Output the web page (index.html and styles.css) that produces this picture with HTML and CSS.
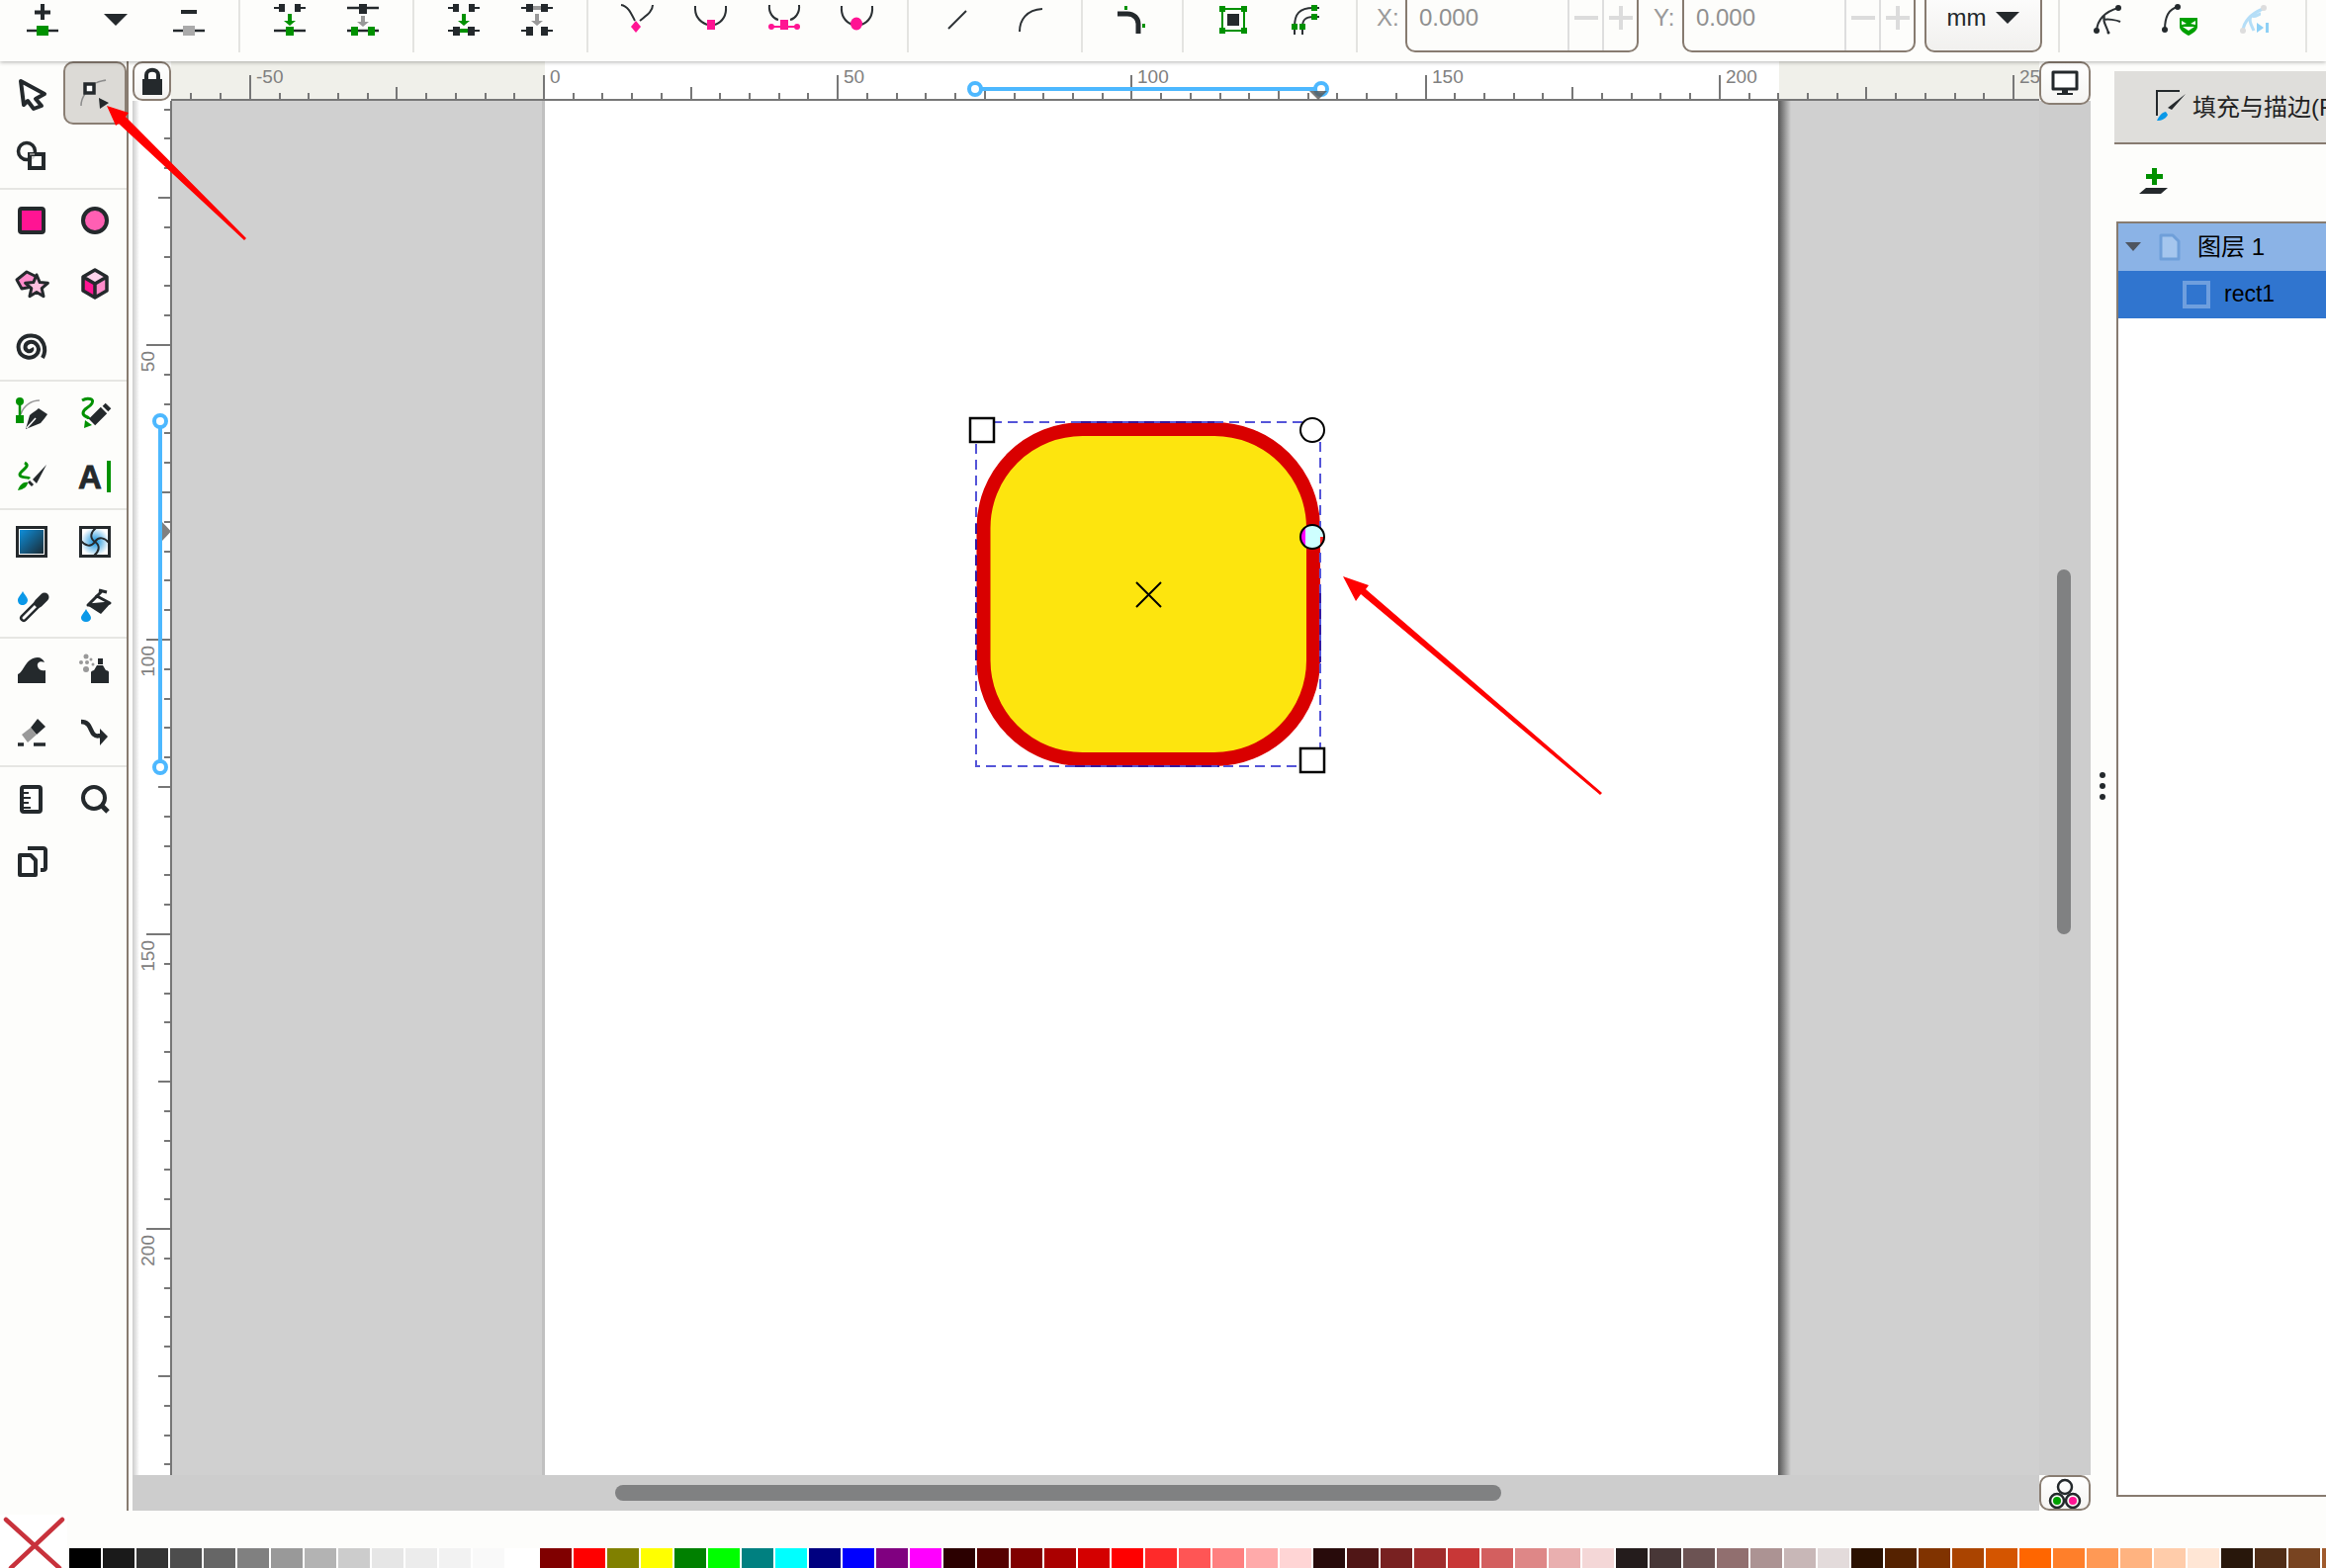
FILE: index.html
```html
<!DOCTYPE html>
<html lang="en">
<head>
  <meta charset="UTF-8">
  <title>Inkscape</title>
  <link rel="stylesheet" href="styles.css">
</head>
<body>
  <!-- top command bar, the icons are cut by the window edge -->
  <div class="toolbar">
    <div class="cmd"><svg width="74" height="53"><path class="d" d="M29 10.500H45V14.500H29ZM35 4H39V20H35Z"/><path class="ln" d="M21 31H53"/><rect class="g" x="31" y="26" width="12" height="10"/></svg></div>
    <div class="cmd"><svg width="74" height="53"><path class="d" d="M25 14H49L37 26Z"/></svg></div>
    <div class="cmd"><svg width="74" height="53"><path class="d" d="M29 10H45V14H29Z"/><path class="ln" d="M21 31H53"/><rect x="31" y="26" width="12" height="10" fill="#aaa"/></svg></div>
    <div class="sep"></div>
    <div class="cmd"><svg width="74" height="53"><path class="d" d="M26 4H32V12H26ZM42 4H48V12H42ZM21 7H26V9H21ZM48 7H53V9H48Z"/><path class="g" d="M35 14H39V21H43L37 26L31 21H35Z"/><path class="ln" d="M21 31H53"/><rect class="g" x="33" y="27" width="8" height="9"/></svg></div>
    <div class="cmd"><svg width="74" height="53"><path class="ln" d="M21 8H53"/><rect class="d" x="33" y="4" width="8" height="10"/><path fill="#999" d="M35 16H39V22H43L37 27L31 22H35Z"/><path class="ln" d="M21 31H53"/><path class="g" d="M25 27H32V36H25ZM42 27H49V36H42Z"/></svg></div>
    <div class="sep"></div>
    <div class="cmd"><svg width="74" height="53"><path class="d" d="M26 4H32V12H26ZM42 4H48V12H42ZM21 7H26V9H21ZM48 7H53V9H48Z"/><path class="g" d="M35 14H39V21H43L37 26L31 21H35Z"/><path class="d" d="M26 27H33V36H26ZM41 27H48V36H41ZM21 30H26V32H21ZM48 30H53V32H48Z"/><rect class="g" x="33" y="29" width="8" height="4"/></svg></div>
    <div class="cmd"><svg width="74" height="53"><path class="d" d="M26 4H33V12H26ZM41 4H48V12H41ZM21 7H26V9H21ZM48 7H53V9H48Z"/><rect x="33" y="6" width="8" height="4" fill="#999"/><path fill="#999" d="M35 14H39V21H43L37 26L31 21H35Z"/><path class="d" d="M26 27H33V36H26ZM41 27H48V36H41ZM21 30H26V32H21ZM48 30H53V32H48Z"/></svg></div>
    <div class="sep"></div>
    <div class="cmd"><svg width="74" height="53"><path class="cv" d="M20 5C27 6 30 13 34 21M52 5C52 12 45 16 39 21"/><path class="p" d="M35 21L40 27L35 33L30 27Z"/></svg></div>
    <div class="cmd"><svg width="74" height="53"><path class="cv" d="M21 6C20 18 28 23 33 25M52 6C53 18 46 23 41 25"/><rect class="p" x="33" y="20" width="8" height="10"/></svg></div>
    <div class="cmd"><svg width="74" height="53"><path class="cv" d="M22 5C21 13 26 19 31 20M52 5C53 13 48 19 43 20"/><rect class="p" x="33" y="20" width="8" height="10"/><circle class="p" cx="24" cy="27" r="3"/><circle class="p" cx="50" cy="27" r="3"/><path d="M24 27H50" stroke="#ff1493" stroke-width="2"/></svg></div>
    <div class="cmd"><svg width="74" height="53"><path class="cv" d="M21 6C20 18 27 23 32 25M52 6C53 18 46 23 41 25"/><ellipse class="p" cx="36" cy="24" rx="6" ry="6.500"/></svg></div>
    <div class="sep"></div>
    <div class="cmd"><svg width="74" height="53"><path class="cv" d="M27 29L45 11"/></svg></div>
    <div class="cmd"><svg width="74" height="53"><path class="cv" d="M25 32C25 20 32 10 48 9"/></svg></div>
    <div class="sep"></div>
    <div class="cmd"><svg width="74" height="53"><path class="thick" d="M22 14H32C39 14 43 19 43 24V34"/><path class="g" d="M29 6H32V10H29ZM47 24H50V28H47Z"/></svg></div>
    <div class="sep"></div>
    <div class="cmd"><svg width="74" height="53"><rect x="31" y="14" width="12" height="12" class="d"/><rect x="26" y="9" width="22" height="22" fill="none" stroke="#009100" stroke-width="2"/><path class="g" d="M23 6H29V12H23ZM45 6H51V12H45ZM23 28H29V34H23ZM45 28H51V34H45Z"/></svg></div>
    <div class="cmd"><svg width="74" height="53"><path class="cv" d="M25 35V27C25 14 30 8 44 8H50M33 35V27C33 20 36 17 44 17H50"/><path class="g" d="M22 24H28V30H22ZM30 24H36V30H30ZM42 5H48V11H42ZM42 14H48V20H42Z"/></svg></div>
    <div class="sep"></div>

    <span class="coord-label coord-x">X:</span>
    <div class="spin">
      <span class="spin-value">0.000</span>
      <span class="spin-btn"><svg width="26" height="26"><path d="M1 11H25V15H1Z"/></svg></span>
      <span class="spin-btn"><svg width="26" height="26"><path d="M1 11H25V15H1ZM11 1H15V25H11Z"/></svg></span>
    </div>
    <span class="coord-label coord-y">Y:</span>
    <div class="spin">
      <span class="spin-value">0.000</span>
      <span class="spin-btn"><svg width="26" height="26"><path d="M1 11H25V15H1Z"/></svg></span>
      <span class="spin-btn"><svg width="26" height="26"><path d="M1 11H25V15H1ZM11 1H15V25H11Z"/></svg></span>
    </div>
    <div class="unit"><span>mm</span><svg width="24" height="12"><path class="d" d="M0 0H24L12 12Z"/></svg></div>
    <div class="sep"></div>
    <div class="cmd"><svg width="74" height="53"><path class="cv" d="M24 31C25 20 32 12 46 8M36 33C33 24 30 22 32 16M31 20C35 19 44 20 48 22"/><circle class="d" cx="24" cy="31" r="3"/><circle class="d" cx="46" cy="8" r="3"/><circle class="d" cx="36" cy="33" r="1.500"/></svg></div>
    <div class="cmd"><svg width="74" height="53"><path class="cv" d="M19 30C19 18 23 9 32 7"/><circle class="d" cx="19" cy="30" r="3"/><circle class="d" cx="32" cy="7" r="3"/><path fill="#00a000" d="M34 18H52V27C52 31 47 34 43 36C39 34 34 31 34 27Z"/><path fill="#fff" d="M36 21L41 24L36 25ZM50 21L45 24L50 25ZM37 27H49L43 31Z"/></svg></div>
    <div class="cmd"><svg width="74" height="53"><path d="M24 31C25 22 30 15 44 9M35 31C32 24 30 22 32 16M33 16C36 18 40 14 42 14" fill="none" stroke="#b5def7" stroke-width="3"/><circle cx="24" cy="31" r="3" fill="#ddd"/><circle cx="45" cy="8" r="3" fill="#ddd"/><path fill="#8ed0f5" d="M38 23L45 28L38 33ZM47 23H50V33H47Z"/></svg></div>
    <div class="sep"></div>
  </div>

  <div class="main">
    <!-- tool box on the left -->
    <div class="tools">
      <div class="tool-group">
        <div class="tool"><svg width="64" height="64"><path d="M21 20L45 33L36 38L42 45L34 48L28 40L24 44Z" fill="#fff" stroke="#24292c" stroke-width="4" stroke-linejoin="round"/></svg></div>
        <div class="tool tool-active"><svg width="64" height="64"><path d="M33 22C36 20 40 20 43 19M18 45C18 40 19 37 22 33" fill="none" stroke="#8d8d8d" stroke-width="1.500"/><rect x="22" y="23" width="9" height="9" fill="#fff" stroke="#24292c" stroke-width="3.500"/><path class="d" d="M36 37L46 42L37 48Z"/></svg></div>
        <div class="tool"><svg width="64" height="64"><circle cx="27" cy="27" r="8.500" fill="none" stroke="#24292c" stroke-width="3.500"/><rect x="30" y="30" width="14" height="14" fill="#fff" fill-opacity=".8" stroke="#24292c" stroke-width="4"/><path d="M30 30H35" stroke="#888" stroke-width="2"/></svg></div>
        <div class="tool"></div>
      </div>
      <div class="tool-group">
        <div class="tool"><svg width="64" height="64"><rect x="20" y="19" width="24" height="24" rx="2" fill="#ff1493" stroke="#24292c" stroke-width="4"/></svg></div>
        <div class="tool"><svg width="64" height="64"><circle cx="32" cy="31" r="12" fill="#ff5fb3" stroke="#24292c" stroke-width="4"/></svg></div>
        <div class="tool"><svg width="64" height="64"><path d="M17 27L27 19L37 24L38 33L22 36Z" fill="#ff8ccb" stroke="#24292c" stroke-width="3" stroke-linejoin="round"/><path d="M37 22L40.200 29.600L48.400 30.300L42.200 35.700L44 43.700L37 39.500L30 43.700L31.800 35.700L25.600 30.300L33.800 29.600Z" fill="#ffc0e0" stroke="#24292c" stroke-width="3" stroke-linejoin="round"/></svg></div>
        <div class="tool"><svg width="64" height="64"><path d="M32 17L44 24L32 31L20 24Z" fill="#ffd5ee"/><path d="M20 24L32 31V45L20 38Z" fill="#ff1493"/><path d="M44 24L32 31V45L44 38Z" fill="#ff8ccb"/><path d="M32 17L44 24V38L32 45L20 38V24ZM20 24L32 31L44 24M32 31V45" fill="none" stroke="#24292c" stroke-width="3.500" stroke-linejoin="round"/></svg></div>
        <div class="tool"><svg width="64" height="64"><path d="M43 42C48 33 44 20 32 19.500C22 19 17 27 19 34C21 42 33 45 38 37C41 31 36 25 30 26C25 27 24 33 28 35C31 36 33 34 32 32" fill="none" stroke="#24292c" stroke-width="4"/></svg></div>
        <div class="tool"></div>
      </div>
      <div class="tool-group">
        <div class="tool"><svg width="64" height="64"><path d="M21 33C24 24 32 19 40 19" fill="none" stroke="#999" stroke-width="1.500"/><path d="M20 20V38" stroke="#009100" stroke-width="2.500"/><circle class="g" cx="20" cy="20" r="4"/><rect class="g" x="16" y="34" width="8" height="8"/><path class="d" d="M26 48L30 34C32 32 37 29 39 27L48 33C46 36 42 41 41 42Z"/><path d="M27 47L36 37" stroke="#fff" stroke-width="1.500"/></svg></div>
        <div class="tool"><svg width="64" height="64"><path d="M19 19C24 16 32 17 29 22C26 27 20 27 20 32C20 36 26 35 26 38" fill="none" stroke="#009100" stroke-width="3"/><path class="g" d="M21 47L22 39L29 44Z"/><path d="M29 41L41 29" stroke="#24292c" stroke-width="9"/><path d="M42.500 27.500L45.500 24.500" stroke="#24292c" stroke-width="8"/></svg></div>
        <div class="tool"><svg width="64" height="64"><path d="M25 18C32 22 20 26 20 30C20 34 28 32 30 34" fill="none" stroke="#009100" stroke-width="3"/><path class="g" d="M18 46C20 40 24 37 28 38C28 42 24 45 18 46Z"/><path class="d" d="M33 35L47 20L37 39Z"/><path d="M29 37L33 41" stroke="#24292c" stroke-width="3"/></svg></div>
        <div class="tool"><svg width="64" height="64"><text x="15" y="44" class="tool-a">A</text><rect class="g" x="44" y="16" width="4" height="32"/></svg></div>
      </div>
      <div class="tool-group">
        <div class="tool"><svg width="64" height="64"><defs><linearGradient id="grad" x1="0" y1="0" x2="1" y2="1"><stop offset="0" stop-color="#0f8fdb"/><stop offset="1" stop-color="#1a2a33"/></linearGradient></defs><rect x="17.500" y="17.500" width="29" height="29" fill="#fff" stroke="#24292c" stroke-width="3"/><rect x="20" y="20" width="24" height="24" fill="url(#grad)"/></svg></div>
        <div class="tool"><svg width="64" height="64"><defs><radialGradient id="mesh"><stop offset="0" stop-color="#0f8fdb"/><stop offset="1" stop-color="#fff"/></radialGradient></defs><rect x="17.500" y="17.500" width="29" height="29" fill="url(#mesh)" stroke="#24292c" stroke-width="3"/><path d="M32 32C26 28 28 22 33 18M32 32C36 26 42 28 46 33M32 32C38 36 36 42 31 46M32 32C28 38 22 36 18 31" fill="none" stroke="#24292c" stroke-width="2"/></svg></div>
        <div class="tool"><svg width="64" height="64"><path class="b" d="M23 18C25 22 28 24 28 27C28 30 25 32 23 32C20 32 18 30 18 27C18 24 21 22 23 18Z"/><path d="M24 45L38 31" stroke="#24292c" stroke-width="8" stroke-linecap="round"/><path d="M24 45L38 31" stroke="#fff" stroke-width="3" stroke-linecap="round"/><path d="M39 30L45 24" stroke="#24292c" stroke-width="9" stroke-linecap="round"/></svg></div>
        <div class="tool"><svg width="64" height="64"><path d="M25 32L34 23L47 30Z" fill="#fff" stroke="#24292c" stroke-width="3" stroke-linejoin="round"/><path d="M33 24L40 17M36 17L44 19" fill="none" stroke="#24292c" stroke-width="3"/><path class="d" d="M24 32L48 30L38 41Z"/><path class="b" d="M23 36C25 40 28 42 28 45C28 47 26 49 23 49C20 49 18 47 18 45C18 42 21 40 23 36Z"/></svg></div>
      </div>
      <div class="tool-group">
        <div class="tool"><svg width="64" height="64"><path class="d" d="M18 45V36C24 34 26 19 38 19C41 19 44 21 45 24C41 22 37 24 38 28C39 32 43 33 46 32V45Z"/></svg></div>
        <div class="tool"><svg width="64" height="64"><path class="d" d="M28 34C28 33 30 32 31 32L34 27H40L43 32C45 32 46 33 46 34V45H28ZM35 20H40V26H35Z"/><g fill="#999"><circle cx="23" cy="18" r="2.500"/><circle cx="18" cy="24" r="2"/><circle cx="28" cy="21" r="1.500"/><circle cx="24" cy="24" r="2"/><circle cx="23" cy="31" r="3"/><circle cx="30" cy="26" r="1.500"/></g></svg></div>
        <div class="tool"><svg width="64" height="64"><path class="d" d="M38 17L46 25L37 33L31 26Z"/><path fill="#999" d="M31 26L22 33L28 41L37 33Z"/><path d="M18 43H24M34 43H46" stroke="#24292c" stroke-width="3.500"/></svg></div>
        <div class="tool"><svg width="64" height="64"><path d="M18 20C28 20 27 30 31 33C34 36 36 33 40 35" fill="none" stroke="#24292c" stroke-width="4.500"/><path class="d" d="M37 27L45 35L37 44Z"/></svg></div>
      </div>
      <div class="tool-group tool-group-last">
        <div class="tool"><svg width="64" height="64"><rect x="22" y="20" width="19" height="25" rx="2" fill="#fff" stroke="#24292c" stroke-width="4"/><path d="M22 26H29M22 31H31M22 36H29M22 41H31" stroke="#24292c" stroke-width="2"/></svg></div>
        <div class="tool"><svg width="64" height="64"><circle cx="31" cy="31" r="11" fill="none" stroke="#24292c" stroke-width="4"/><path d="M39 39L45 45" stroke="#24292c" stroke-width="5"/></svg></div>
        <div class="tool"><svg width="64" height="64"><path d="M20 25H31L36 30V45H20Z" fill="#fff" stroke="#24292c" stroke-width="4" stroke-linejoin="round"/><path d="M28 18H44C46 18 46 20 46 20V38C46 40 44 40 41 40" fill="none" stroke="#24292c" stroke-width="4"/></svg></div>
      </div>
    </div>

    <div class="work">
      <div class="corner-btn lock-btn"><svg width="22" height="30"><path d="M5 14V9C5 2 17 2 17 9V14" fill="none" stroke="#24292c" stroke-width="4"/><rect class="d" x="1" y="13" width="20" height="16"/></svg></div>
      <svg id="hruler" class="hruler" width="1889" height="40" viewBox="173 62 1889 40">
        <rect x="551" y="62" width="1248" height="40" fill="#fff"/>
        <g id="hticks"></g>
        <rect x="173" y="100" width="1889" height="2" fill="#777"/>
        <path d="M986 90H1336" stroke="#4db8ff" stroke-width="4"/>
        <circle cx="986" cy="90" r="6" fill="#fff" stroke="#4db8ff" stroke-width="4"/>
        <circle cx="1336" cy="90" r="6" fill="#fff" stroke="#4db8ff" stroke-width="4"/>
        <path d="M1324 92H1342L1333 101Z" fill="#555" fill-opacity=".8"/>
      </svg>
      <div class="corner-btn monitor-btn"><svg width="30" height="26"><path d="M3 2H27V19H3Z" fill="#fff" stroke="#24292c" stroke-width="3" stroke-linejoin="round"/><path class="d" d="M12 20H18V23H23V25H7V23H12Z"/></svg></div>

      <svg id="vruler" class="vruler" width="39" height="1390" viewBox="134 102 39 1390">
        <g id="vticks"></g>
        <rect x="172" y="102" width="1" height="1390" fill="#777"/>
        <path d="M162 426V776" stroke="#4db8ff" stroke-width="4"/>
        <circle cx="162" cy="426" r="6" fill="#fff" stroke="#4db8ff" stroke-width="4"/>
        <circle cx="162" cy="776" r="6" fill="#fff" stroke="#4db8ff" stroke-width="4"/>
        <path d="M164 528L173 537.500L164 547Z" fill="#808080"/>
      </svg>

      <!-- drawing area, coordinates are the same as the window -->
      <svg class="canvas" width="1889" height="1390" viewBox="173 102 1889 1390">
        <defs>
          <linearGradient id="pageshadow"><stop offset="0" stop-color="#555"/><stop offset="1" stop-color="#d0d0d0"/></linearGradient>
          <clipPath id="handleclip"><circle cx="1327" cy="543" r="12"/></clipPath>
        </defs>
        <rect x="173" y="102" width="1" height="1390" fill="#777"/>
        <rect x="548" y="102" width="3" height="1390" fill="#c0c0c0"/>
        <rect x="1798" y="102" width="13" height="1390" fill="url(#pageshadow)"/>
        <rect x="551" y="102" width="1247" height="1390" fill="#fff"/>
        <rect x="994.500" y="434" width="333.500" height="334" rx="100" fill="#fde50e" stroke="#d90000" stroke-width="14"/>
        <rect x="987" y="427" width="348" height="348" fill="none" stroke="#5555d8" stroke-width="2" stroke-dasharray="10 6"/>
        <path d="M987 530V670M1093 427H1228M1335 600V670M1087 775H1233" fill="none" stroke="#3418a0" stroke-width="2" stroke-dasharray="10 6"/>
        <path d="M1149 589L1174 614M1174 589L1149 614" stroke="#000" stroke-width="2"/>
        <rect x="981" y="423" width="24" height="24" fill="#fff" stroke="#000" stroke-width="2.500"/>
        <rect x="1315" y="757" width="24" height="24" fill="#fff" stroke="#000" stroke-width="2.500"/>
        <circle cx="1327" cy="435" r="12" fill="#fff" stroke="#000" stroke-width="2"/>
        <circle cx="1327" cy="543" r="12" fill="#ceffff"/>
        <g clip-path="url(#handleclip)"><rect x="1315" y="531" width="5" height="24" fill="#f0f"/><rect x="1335" y="543" width="5" height="12" fill="#f22"/></g>
        <circle cx="1327" cy="543" r="12" fill="none" stroke="#000" stroke-width="2"/>
      </svg>

      <div class="vscroll"><div class="vthumb"></div></div>
      <div class="hscroll"><div class="hthumb"></div></div>
      <div class="corner-btn color-btn"><svg width="48" height="36"><g fill="none" stroke="#24292c" stroke-width="2.500"><circle cx="24" cy="12" r="7"/><circle cx="16" cy="26" r="7"/><circle cx="32" cy="26" r="7"/></g><circle cx="16" cy="26" r="4" fill="#00a000"/><circle cx="32" cy="26" r="4" fill="#ff1493"/></svg></div>
    </div>

    <div class="dock-handle"><i></i><i></i><i></i></div>

    <div class="panel">
      <div class="tab">
        <svg width="32" height="32"><path d="M2 27V2H25" fill="none" stroke="#24292c" stroke-width="2"/><path class="d" d="M31 5L17 21L13 19Z"/><path class="b" d="M2 32C4 28 6 24 11 23L13 26C11 30 7 32 2 32Z"/></svg>
        <span class="tab-title">填充与描边(F)</span>
      </div>
      <div class="panel-tools"><svg width="30" height="32"><path class="g" d="M14 0H19V6H25V11H19V17H14V11H8V6H14Z"/><path class="d" d="M8 20H30L23 26H1Z"/></svg></div>
      <div class="tree">
        <div class="tree-row tree-layer">
          <svg width="18" height="10"><path fill="#4e5560" d="M1 0H17L9 9Z"/></svg>
          <svg class="tree-doc" width="22" height="28"><path d="M2 2H14L20 8V26H2Z" fill="#a5c6ee" stroke="#6f9fd9" stroke-width="3" stroke-linejoin="round"/></svg>
          <span>图层 1</span>
        </div>
        <div class="tree-row tree-object">
          <svg width="28" height="28"><rect x="2" y="2" width="24" height="24" fill="none" stroke="#6f9fde" stroke-width="4"/></svg>
          <span>rect1</span>
        </div>
      </div>
    </div>
  </div>

  <div class="palette">
    <svg class="no-color" width="68" height="54"><path d="M6 5L60 54M63 5L11 54" fill="none" stroke="#c8323c" stroke-width="4.500" stroke-linecap="round"/></svg>
    <div id="swatches" class="swatches"></div>
  </div>

  <!-- red arrows drawn over the screenshot -->
  <svg class="arrows" width="2352" height="1586">
    <path d="M108 107L130 114L127 118L249 241L247 243L120 125L117 127Z"/>
    <path d="M1358 583L1384 592L1381 596L1620 802L1618 804L1376 601L1371 608Z"/>
  </svg>

  <script src="page.js"></script>
</body>
</html>
```

FILE: styles.css
```css
* {
  box-sizing: border-box;
}
body {
  margin: 0;
  width: 2352px;
  height: 1586px;
  overflow: hidden;
  position: relative;
  background: #fdfdfb;
  font-family: "Liberation Sans", "Noto Sans CJK SC", sans-serif;
  color: #24292c;
}
svg {
  display: block;
  flex: none;
}
.d { fill: #24292c; }
.g { fill: #009100; }
.p { fill: #ff1493; }
.b { fill: #0a98e8; }
.ln { stroke: #24292c; stroke-width: 2.5; fill: none; }
.cv { stroke: #2c3134; stroke-width: 2; fill: none; }
.thick { stroke: #24292c; stroke-width: 5; fill: none; }

/* top bar */
.toolbar {
  position: relative;
  z-index: 2;
  display: flex;
  height: 62px;
  padding-left: 6px;
  background: #fdfdfb;
  box-shadow: 0 1px 4px rgba(0, 0, 0, 0.3);
}
.cmd {
  width: 74px;
  flex: none;
}
.sep {
  flex: none;
  width: 2px;
  height: 53px;
  margin: 0 13px;
  background: #e4e4e1;
}
.coord-label {
  font-size: 24px;
  line-height: 36px;
  color: #999;
}
.coord-x {
  margin-left: 6px;
  width: 29px;
}
.coord-y {
  margin-left: 15px;
  width: 29px;
}
.spin {
  display: flex;
  align-items: stretch;
  width: 236px;
  height: 70px;
  margin-top: -17px;
  border: 2px solid #877b70;
  border-radius: 10px;
  background: #fdfdfb;
}
.spin-value {
  flex: 1;
  padding-left: 12px;
  font-size: 24px;
  line-height: 66px;
  color: #909090;
}
.spin-btn {
  display: flex;
  align-items: center;
  justify-content: center;
  width: 35px;
  border-left: 2px solid #dedede;
  fill: #dcdcdc;
}
.unit {
  display: flex;
  align-items: center;
  justify-content: center;
  gap: 10px;
  width: 119px;
  height: 70px;
  margin: -17px 3px 0 9px;
  border: 2px solid #877b70;
  border-radius: 10px;
  background: linear-gradient(#fff, #f1f0ee);
  font-size: 24px;
}

.main {
  display: flex;
  height: 1466px;
}

/* tool box */
.tools {
  flex: none;
  width: 130px;
  border-right: 2px solid #877b70;
}
.tool-group {
  display: grid;
  grid-template-columns: 64px 64px;
  grid-auto-rows: 64px;
  border-bottom: 2px solid #e6e6e3;
}
.tool-group-last {
  border-bottom: none;
}
.tool {
  display: flex;
  align-items: center;
  justify-content: center;
}
.tool-active {
  background: #dcdad6;
  border: 2px solid #8a7e73;
  border-radius: 10px;
}
.tool-a {
  font-family: "Liberation Sans", sans-serif;
  font-weight: bold;
  font-size: 33px;
  fill: #24292c;
  stroke: #24292c;
  stroke-width: 0.8;
}

/* canvas with rulers and scrollbars */
.work {
  flex: none;
  display: grid;
  grid-template-columns: 39px 1889px 52px;
  grid-template-rows: 40px 1390px 36px;
  margin-left: 4px;
}
.corner-btn {
  display: flex;
  align-items: center;
  justify-content: center;
  border: 2px solid #8a7e73;
  border-radius: 10px;
  background: linear-gradient(#fff, #f5f4f2);
  position: relative;
  z-index: 1;
}
.monitor-btn {
  height: 44px;
}
.color-btn {
  overflow: hidden;
}
.hruler {
  background: #f0f0ea;
}
.vruler {
  background: linear-gradient(to right, #ccc, #fff 7px);
}
.tick {
  stroke: #777;
  stroke-width: 2;
}
.ruler-label {
  font-family: "Liberation Sans", sans-serif;
  font-size: 19px;
  fill: #808080;
}
.canvas {
  background: #d0d0d0;
}
.vscroll {
  padding: 474px 0 0 18px;
  background: #cdcdcd;
}
.vthumb {
  width: 14px;
  height: 369px;
  border-radius: 7px;
  background: #808182;
}
.hscroll {
  grid-column: 1 / 3;
  padding: 10px 0 0 488px;
  background: #cdcdcd;
}
.hthumb {
  width: 896px;
  height: 16px;
  border-radius: 8px;
  background: #808182;
}

.dock-handle {
  flex: none;
  display: flex;
  flex-direction: column;
  gap: 5px;
  width: 24px;
  padding: 719px 0 0 9px;
}
.dock-handle i {
  width: 6px;
  height: 6px;
  border-radius: 50%;
  background: #24292c;
}

/* right panel */
.panel {
  flex: none;
  width: 214px;
  padding-top: 10px;
  overflow: hidden;
}
.tab {
  display: flex;
  align-items: center;
  gap: 6px;
  width: 214px;
  height: 74px;
  padding: 0 0 4px 41px;
  background: #dfdedb;
  border-bottom: 2px solid #877b70;
  overflow: hidden;
}
.tab-title {
  font-size: 24px;
  white-space: nowrap;
  color: #222;
}
.panel-tools {
  height: 78px;
  padding: 24px 0 0 24px;
}
.tree {
  height: 1290px;
  margin-left: 2px;
  background: #fff;
  border: 2px solid #877b70;
  border-right: none;
}
.tree-row {
  display: flex;
  align-items: center;
  height: 48px;
  color: #000;
}
.tree-layer {
  padding-left: 6px;
  background: #8bb3e6;
  font-size: 24px;
}
.tree-layer span {
  padding-bottom: 6px;
}
.tree-doc {
  margin: 0 17px 0 17px;
}
.tree-object {
  padding-left: 65px;
  gap: 14px;
  background: #3075cf;
  font-size: 23px;
}
.tree-object span {
  padding-bottom: 2px;
}

/* colour strip */
.palette {
  display: flex;
  align-items: flex-end;
  height: 58px;
}
.no-color {
  background: #fff;
  margin-right: 2px;
}
.swatches {
  display: flex;
  gap: 2px;
  height: 20px;
  background: #fff;
}
.swatch {
  flex: none;
  width: 32px;
  height: 20px;
}

.arrows {
  position: absolute;
  left: 0;
  top: 0;
  z-index: 3;
  fill: #ff0000;
  pointer-events: none;
}
```

FILE: page.js
```js
const svgNS = 'http://www.w3.org/2000/svg';

// Ruler ticks, every 5 mm is about 29.7px
function addTick(group, x1, y1, x2, y2) {
  const line = document.createElementNS(svgNS, 'line');
  line.setAttribute('class', 'tick');
  line.setAttribute('x1', x1);
  line.setAttribute('y1', y1);
  line.setAttribute('x2', x2);
  line.setAttribute('y2', y2);
  group.appendChild(line);
}

function addLabel(group, x, y, text, vertical) {
  const label = document.createElementNS(svgNS, 'text');
  label.setAttribute('class', 'ruler-label');
  label.setAttribute('x', x);
  label.setAttribute('y', y);
  if (vertical) {
    label.setAttribute('text-anchor', 'end');
    label.setAttribute('transform', `rotate(-90 ${x} ${y})`);
  }
  label.textContent = text;
  group.appendChild(label);
}

function tickSize(mm) {
  if (mm % 50 === 0) return 25;
  if (mm % 25 === 0) return 13;
  return 7;
}

const hticks = document.getElementById('hticks');
for (let mm = -60; mm <= 255; mm += 5) {
  const x = Math.round(550 + mm * 5.944);
  addTick(hticks, x, 101 - tickSize(mm), x, 101);
  if (mm % 50 === 0) addLabel(hticks, x + 6, 84, mm);
}

const vticks = document.getElementById('vticks');
for (let mm = 10; mm <= 240; mm += 5) {
  const y = Math.round(51 + mm * 5.96);
  addTick(vticks, 173 - tickSize(mm), y, 173, y);
  if (mm % 50 === 0) addLabel(vticks, 156, y + 6, mm, true);
}

// Palette colours
const colors = [
  '#000000', '#1a1a1a', '#333333', '#4d4d4d', '#666666', '#808080', '#999999', '#b3b3b3', '#cccccc', '#e6e6e6', '#ececec', '#f2f2f2', '#f9f9f9', '#ffffff',
  '#800000', '#ff0000', '#808000', '#ffff00', '#008000', '#00ff00', '#008080', '#00ffff', '#000080', '#0000ff', '#800080', '#ff00ff',
  '#2b0000', '#550000', '#800000', '#aa0000', '#d40000', '#ff0000', '#ff2a2a', '#ff5555', '#ff8080', '#ffaaaa', '#ffd5d5',
  '#280b0b', '#501616', '#782121', '#a02c2c', '#c83737', '#d35f5f', '#de8787', '#e9afaf', '#f4d7d7',
  '#241c1c', '#483737', '#6c5353', '#916f6f', '#ac9393', '#c8b7b7', '#e3dbdb',
  '#2b1100', '#552200', '#803300', '#aa4400', '#d45500', '#ff6600', '#ff7f2a', '#ff9955', '#ffb380', '#ffccaa', '#ffe6d5',
  '#28170b', '#502d16', '#784421', '#a05a2c'
];

const swatches = document.getElementById('swatches');
colors.forEach(color => {
  const swatch = document.createElement('div');
  swatch.className = 'swatch';
  swatch.style.backgroundColor = color;
  swatches.appendChild(swatch);
});
```
